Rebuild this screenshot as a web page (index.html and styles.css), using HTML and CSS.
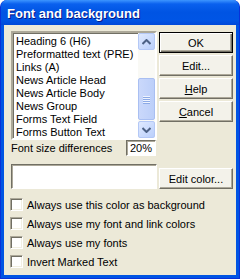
FILE: index.html
```html
<!DOCTYPE html>
<html lang="en">
	<head>
		<meta charset="UTF-8" />
		<title>Font and background</title>
		<link rel="stylesheet" href="styles.css">
	</head>
	<body>
		<div class="window">
			<div class="titlebar">
				<span class="title">Font and background</span>
			</div>
			<div class="client">
				<div class="top">
					<div class="left">
						<div class="listbox">
							<ul class="items">
								<li>Heading 6 (H6)</li>
								<li>Preformatted text (PRE)</li>
								<li>Links (A)</li>
								<li>News Article Head</li>
								<li>News Article Body</li>
								<li>News Group</li>
								<li>Forms Text Field</li>
								<li>Forms Button Text</li>
							</ul>
							<div class="scrollbar">
								<div class="arrow">
									<svg width="9" height="6" viewBox="0 0 9 6"><path d="M0.5 5 L4.5 1 L8.5 5" fill="none" stroke="#4d6185" stroke-width="2"/></svg>
								</div>
								<div class="track">
									<div class="thumb">
										<span class="grip"></span><span class="grip"></span><span class="grip"></span><span class="grip"></span>
									</div>
								</div>
								<div class="arrow">
									<svg width="9" height="6" viewBox="0 0 9 6"><path d="M0.5 1 L4.5 5 L8.5 1" fill="none" stroke="#4d6185" stroke-width="2"/></svg>
								</div>
							</div>
						</div>
						<div class="sizerow">
							<span>Font size differences</span>
							<div class="field">20%</div>
						</div>
					</div>
					<div class="buttons">
						<button class="btn default">OK</button>
						<button class="btn">Edit...</button>
						<button class="btn"><u>H</u>elp</button>
						<button class="btn"><u>C</u>ancel</button>
					</div>
				</div>
				<div class="colorrow">
					<div class="swatch"></div>
					<button class="btn">Edit color...</button>
				</div>
				<div class="checks">
					<label class="check"><span class="box"></span>Always use this color as background</label>
					<label class="check"><span class="box"></span>Always use my font and link colors</label>
					<label class="check"><span class="box"></span>Always use my fonts</label>
					<label class="check"><span class="box"></span>Invert Marked Text</label>
				</div>
			</div>
		</div>
	</body>
</html>
```
FILE: styles.css
```css
body {
	margin: 0;
	background-color: #ffffff;
	font-family: "Liberation Sans", Arial, sans-serif;
	font-size: 11px;
	color: #000000;
}
.window {
	width: 240px;
	height: 279px;
	box-sizing: border-box;
	display: flex;
	flex-direction: column;
	background-color: #0054e3;
	border-radius: 7px 7px 0 0;
	border: 1px solid #0831d9;
	border-top: 0;
	overflow: hidden;
}
.titlebar {
	height: 25px;
	flex: none;
	display: flex;
	align-items: center;
	padding-left: 6px;
	background: linear-gradient(#3d95ff 0px, #0a60ee 4px, #0054e3 12px, #0055e5 20px, #0048d8 25px);
}
.title {
	color: #ffffff;
	font-weight: bold;
	font-size: 13px;
	text-shadow: 1px 1px 0 #0a1883;
	margin-top: 2px;
}
.client {
	flex: 1;
	margin: 0 3px 3px 3px;
	background-color: #ece9d8;
	padding: 6px 3px 0 7px;
}
.top {
	display: flex;
	gap: 2px;
}
.left {
	width: 146px;
}
.listbox {
	height: 109px;
	box-sizing: border-box;
	display: flex;
	background-color: #ffffff;
	border: 2px solid;
	border-color: #aca899 #ffffff #ffffff #aca899;
	box-shadow: inset 1px 1px 0 #716f64;
}
.items {
	list-style: none;
	margin: 0;
	padding: 2px 0 0 3px;
	flex: 1;
}
.items li {
	height: 13px;
	line-height: 13px;
	white-space: nowrap;
}
.scrollbar {
	width: 17px;
	display: flex;
	flex-direction: column;
	background-color: #f9f9f5;
}
.arrow {
	height: 17px;
	box-sizing: border-box;
	display: flex;
	align-items: center;
	justify-content: center;
	background: linear-gradient(135deg, #dfe9ff, #bacffb);
	border: 1px solid #b4c8f6;
	border-radius: 2px;
}
.track {
	flex: 1;
	display: flex;
	flex-direction: column;
	justify-content: flex-end;
	padding-bottom: 1px;
}
.thumb {
	height: 42px;
	box-sizing: border-box;
	background: linear-gradient(90deg, #cad8fb, #bccff9);
	border: 1px solid #a9bff2;
	border-radius: 2px;
	display: flex;
	flex-direction: column;
	align-items: center;
	justify-content: center;
	gap: 1px;
}
.grip {
	width: 7px;
	height: 1px;
	background-color: #eef3fe;
	box-shadow: 0 1px 0 #8caae6;
}
.sizerow {
	display: flex;
	align-items: center;
	justify-content: space-between;
	margin-top: 0;
	padding-right: 1px;
}
.field {
	width: 30px;
	height: 16px;
	box-sizing: border-box;
	background-color: #ffffff;
	border: 1px solid;
	border-color: #716f64 #ffffff #ffffff #716f64;
	box-shadow: inset 1px 1px 0 #aca899;
	padding: 1px 0 0 3px;
	line-height: 13px;
}
.buttons {
	display: flex;
	flex-direction: column;
	gap: 2px;
	padding-top: 1px;
}
.btn {
	width: 74px;
	height: 21px;
	box-sizing: border-box;
	font-family: "Liberation Sans", Arial, sans-serif;
	font-size: 11px;
	color: #000000;
	padding: 0;
	background-color: #f3f2ea;
	border: 1px solid;
	border-color: #ffffff #716f64 #716f64 #ffffff;
	box-shadow: inset -1px -1px 0 #aca899;
}
.btn.default {
	border: 1px solid #000000;
	box-shadow: inset 1px 1px 0 #ffffff, inset -1px -1px 0 #716f64, inset -2px -2px 0 #aca899;
}
.colorrow {
	display: flex;
	align-items: flex-end;
	gap: 2px;
	margin-top: 8px;
}
.swatch {
	width: 146px;
	height: 25px;
	box-sizing: border-box;
	background-color: #ffffff;
	border: 1px solid;
	border-color: #716f64 #ffffff #ffffff #716f64;
	box-shadow: inset 1px 1px 0 #aca899;
}
.checks {
	display: flex;
	flex-direction: column;
	margin-top: 6px;
}
.check {
	display: flex;
	align-items: center;
	height: 19px;
	gap: 4px;
	margin-left: -1px;
}
.box {
	width: 13px;
	height: 13px;
	box-sizing: border-box;
	background-color: #ffffff;
	border: 1px solid;
	border-color: #aca899 #ffffff #ffffff #aca899;
	box-shadow: inset 1px 1px 0 #716f64, inset -1px -1px 0 #f1efe2;
}
```
